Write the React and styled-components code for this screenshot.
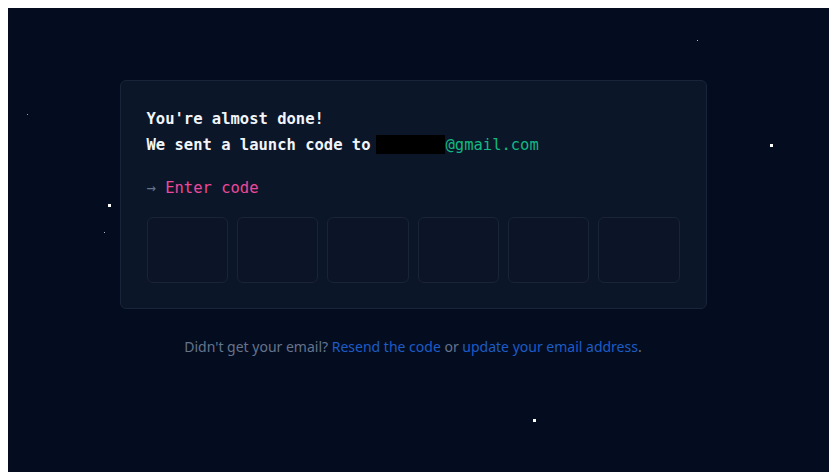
import React from "react";
import styled, { createGlobalStyle } from "styled-components";

const GlobalStyle = createGlobalStyle`
  html, body {
    overflow: hidden;
  }
  body {
    margin: 8px;
    background: #ffffff;
  }
`;

const stars = [
  { x: 689, y: 32, size: 1, op: 0.7 },
  { x: 19, y: 106, size: 1, op: 0.6 },
  { x: 762, y: 136, size: 3, op: 1 },
  { x: 100, y: 196, size: 3, op: 1 },
  { x: 96, y: 224, size: 1, op: 0.7 },
  { x: 525, y: 411, size: 3, op: 1 },
];

export default function App() {
  return (
    <>
      <GlobalStyle />
      <Space>
        {stars.map((s, i) => (
          <Star
            key={i}
            style={{ left: s.x, top: s.y, width: s.size, height: s.size, opacity: s.op }}
          />
        ))}
        <Column>
          <Card>
            <Heading>
              <Line>You're almost done!</Line>
              <Line>
                We sent a launch code to<Redacted />
                <Email>@gmail.com</Email>
              </Line>
            </Heading>
            <Prompt>
              <Arrow>→</Arrow> Enter code
            </Prompt>
            <CodeRow>
              {[0, 1, 2, 3, 4, 5].map((i) => (
                <CodeBox key={i} />
              ))}
            </CodeRow>
          </Card>
          <Help>
            Didn't get your email? <Link>Resend the code</Link> or{" "}
            <Link>update your email address</Link>.
          </Help>
        </Column>
      </Space>
    </>
  );
}

const Space = styled.div`
  position: relative;
  background: #040c20;
  min-height: 480px;
  display: flex;
  justify-content: center;
  padding: 72px 11px 0 0;
  box-sizing: border-box;
`;

const Star = styled.span`
  position: absolute;
  background: #ffffff;
`;

const Column = styled.div`
  width: 587px;
  display: flex;
  flex-direction: column;
  align-items: center;
`;

const Card = styled.div`
  width: 100%;
  box-sizing: border-box;
  background: #0c1629;
  border: 1px solid #19233a;
  border-radius: 6px;
  padding: 25px 26px 25px;
  font-family: "DejaVu Sans Mono", "Liberation Mono", monospace;
  font-size: 15.5px;
`;

const Heading = styled.div`
  color: #f1f5f9;
  font-weight: 700;
`;

const Line = styled.div`
  line-height: 26px;
  white-space: nowrap;
`;

const Redacted = styled.span`
  display: inline-block;
  width: 69px;
  height: 19px;
  margin-left: 6px;
  background: #000000;
  vertical-align: -4px;
`;

const Email = styled.span`
  color: #10b981;
  font-weight: 400;
`;

const Prompt = styled.div`
  margin-top: 17px;
  line-height: 26px;
  color: #ec4899;
`;

const Arrow = styled.span`
  color: #64748b;
`;

const CodeRow = styled.div`
  margin-top: 16px;
  display: grid;
  grid-template-columns: repeat(6, 1fr);
  gap: 9px;
`;

const CodeBox = styled.div`
  height: 66px;
  box-sizing: border-box;
  background: #0b1527;
  border: 1px solid #1a2438;
  border-radius: 6px;
`;

const Help = styled.p`
  margin: 28px 0 0;
  font-family: "Noto Sans", "Open Sans", sans-serif;
  font-size: 14px;
  line-height: 20px;
  color: #64748b;
  white-space: nowrap;
`;

const Link = styled.a`
  color: #1c5cc6;
  text-decoration: none;
  cursor: pointer;
`;
